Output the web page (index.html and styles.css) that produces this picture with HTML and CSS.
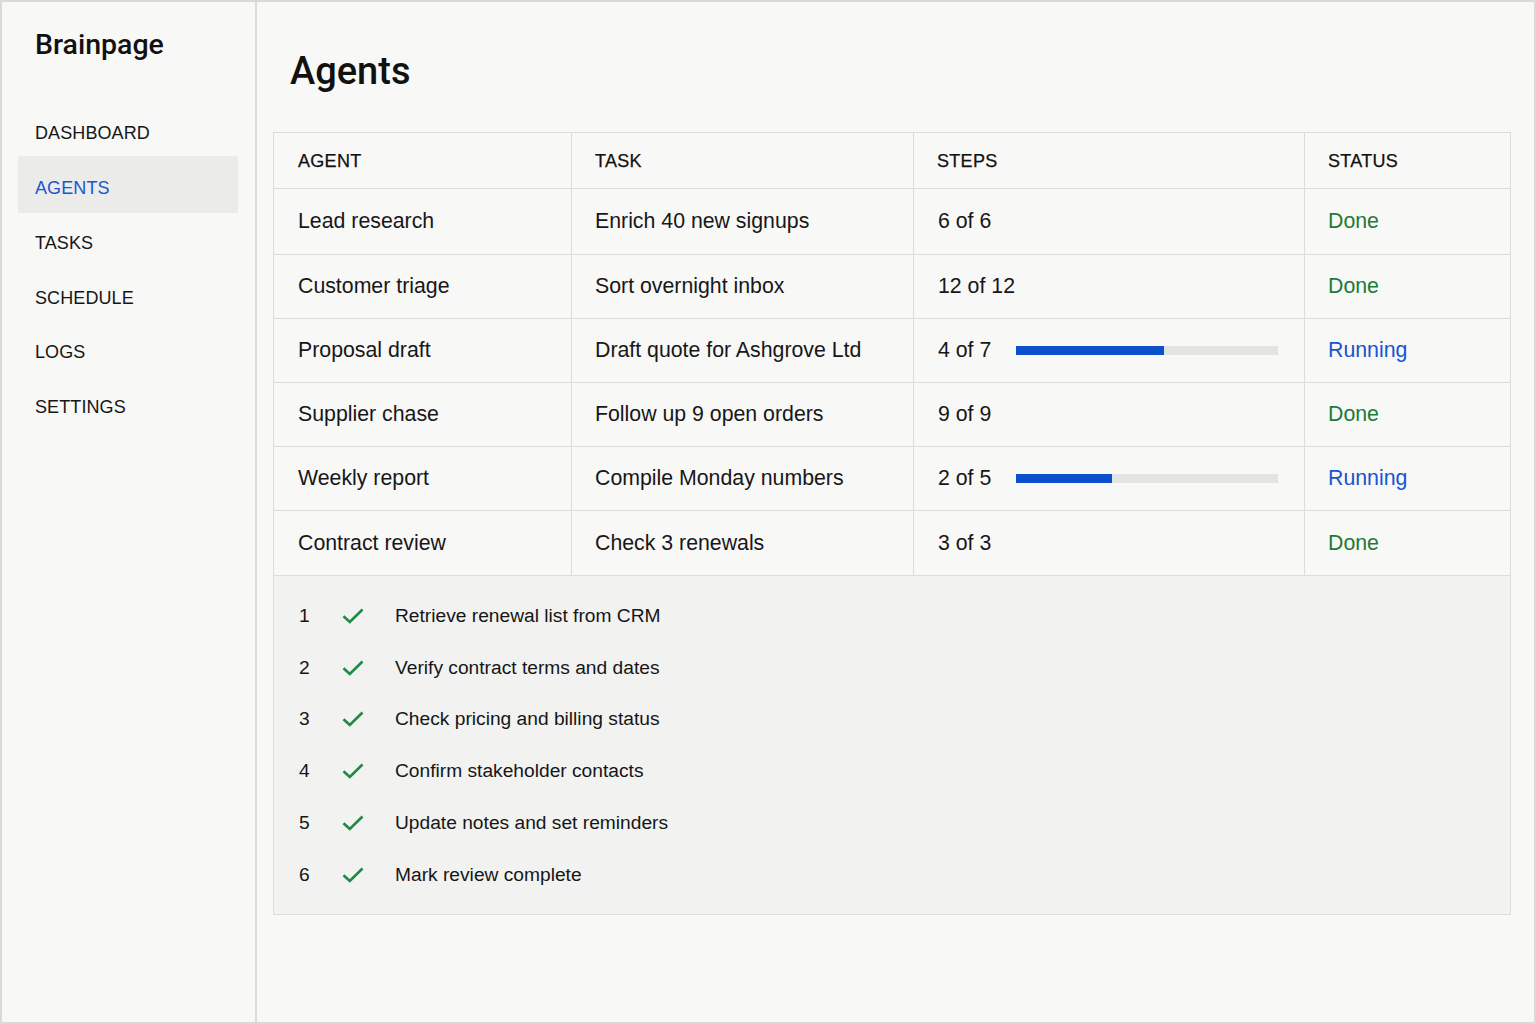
FILE: index.html
```html
<!DOCTYPE html>
<html lang="en">
<head>
<meta charset="utf-8">
<title>Brainpage – Agents</title>
<link rel="stylesheet" href="styles.css">
</head>
<body>
<div class="app">
  <aside class="sidebar">
    <div class="brand">Brainpage</div>
    <nav class="nav">
      <a class="nav-item">DASHBOARD</a>
      <a class="nav-item active">AGENTS</a>
      <a class="nav-item">TASKS</a>
      <a class="nav-item">SCHEDULE</a>
      <a class="nav-item">LOGS</a>
      <a class="nav-item">SETTINGS</a>
    </nav>
  </aside>
  <main class="main">
    <h1 class="title">Agents</h1>
    <table class="agents">
      <colgroup>
        <col class="c-agent"><col class="c-task"><col class="c-steps"><col class="c-status">
      </colgroup>
      <thead>
        <tr><th>AGENT</th><th>TASK</th><th>STEPS</th><th>STATUS</th></tr>
      </thead>
      <tbody>
        <tr class="first"><td>Lead research</td><td>Enrich 40 new signups</td><td><div class="steps"><span class="count">6 of 6</span></div></td><td class="done">Done</td></tr>
        <tr><td>Customer triage</td><td>Sort overnight inbox</td><td><div class="steps"><span class="count">12 of 12</span></div></td><td class="done">Done</td></tr>
        <tr><td>Proposal draft</td><td>Draft quote for Ashgrove Ltd</td><td><div class="steps"><span class="count">4 of 7</span><span class="bar"><span class="fill" style="width:56.5%"></span></span></div></td><td class="running">Running</td></tr>
        <tr><td>Supplier chase</td><td>Follow up 9 open orders</td><td><div class="steps"><span class="count">9 of 9</span></div></td><td class="done">Done</td></tr>
        <tr><td>Weekly report</td><td>Compile Monday numbers</td><td><div class="steps"><span class="count">2 of 5</span><span class="bar"><span class="fill" style="width:36.6%"></span></span></div></td><td class="running">Running</td></tr>
        <tr class="last"><td>Contract review</td><td>Check 3 renewals</td><td><div class="steps"><span class="count">3 of 3</span></div></td><td class="done">Done</td></tr>
        <tr class="detail">
          <td colspan="4">
            <ol class="step-list">
              <li><span class="num">1</span><svg class="check" viewBox="0 0 22 16"><path d="M1.5 8.2 L7.8 14 L20.5 1.5" /></svg><span class="label">Retrieve renewal list from CRM</span></li>
              <li><span class="num">2</span><svg class="check" viewBox="0 0 22 16"><path d="M1.5 8.2 L7.8 14 L20.5 1.5" /></svg><span class="label">Verify contract terms and dates</span></li>
              <li><span class="num">3</span><svg class="check" viewBox="0 0 22 16"><path d="M1.5 8.2 L7.8 14 L20.5 1.5" /></svg><span class="label">Check pricing and billing status</span></li>
              <li><span class="num">4</span><svg class="check" viewBox="0 0 22 16"><path d="M1.5 8.2 L7.8 14 L20.5 1.5" /></svg><span class="label">Confirm stakeholder contacts</span></li>
              <li><span class="num">5</span><svg class="check" viewBox="0 0 22 16"><path d="M1.5 8.2 L7.8 14 L20.5 1.5" /></svg><span class="label">Update notes and set reminders</span></li>
              <li><span class="num">6</span><svg class="check" viewBox="0 0 22 16"><path d="M1.5 8.2 L7.8 14 L20.5 1.5" /></svg><span class="label">Mark review complete</span></li>
            </ol>
          </td>
        </tr>
      </tbody>
    </table>
  </main>
</div>
</body>
</html>
```
FILE: styles.css
```css
* { box-sizing: border-box; }
html, body { margin: 0; padding: 0; }
body {
  font-family: "Liberation Sans", Arial, sans-serif;
  color: #151515;
  background: #f8f8f7;
}
.app {
  display: flex;
  width: 1536px;
  height: 1024px;
  border: 2px solid #dadada;
  background: #f8f8f7;
}
.sidebar {
  width: 255px;
  flex: none;
  border-right: 2px solid #dcdcdc;
  background: #f8f8f7;
  padding: 25px 0 0 0;
}
.brand {
  font-family: Roboto, "Liberation Sans", sans-serif;
  font-weight: 500;
  font-size: 28.5px;
  line-height: 36px;
  color: #111;
  padding-left: 33px;
}
.nav {
  display: flex;
  flex-direction: column;
  margin-top: 43.6px;
}
.nav-item {
  display: flex;
  align-items: center;
  height: 54.7px;
  margin: 0 17px 0 16px;
  padding-left: 17px;
  font-size: 18px;
  color: #161616;
  letter-spacing: 0.1px;
}
.nav-item.active {
  background: #ebebea;
  color: #1b56d2;
  height: 57px;
  margin-top: -5.3px;
  margin-bottom: 3px;
  padding-top: 8px;
}
.main {
  flex: 1;
  padding: 0 23px 0 16px;
}
.title {
  font-family: Roboto, "Liberation Sans", sans-serif;
  font-weight: 500;
  font-size: 38px;
  line-height: 44px;
  color: #111;
  margin: 47px 0 0 17px;
}
.agents {
  margin-top: 39px;
  width: 1237px;
  border-collapse: collapse;
  table-layout: fixed;
  border: 1.5px solid #d9d9d9;
}
.c-agent { width: 298px; }
.c-task { width: 342px; }
.c-steps { width: 391px; }
.c-status { width: 206px; }
.agents th, .agents td {
  border: 1.5px solid #dcdcdc;
  text-align: left;
  padding: 0 0 0 23px;
  vertical-align: middle;
}
.agents th {
  height: 56px;
  padding-top: 2px;
  font-size: 18px;
  font-weight: normal;
  color: #111;
  letter-spacing: 0.3px;
  -webkit-text-stroke: 0.25px #111;
}
.agents th:first-child, .agents td:first-child { padding-left: 24px; }
.agents tbody tr { height: 64px; }
.agents tbody tr.first { height: 66px; }
.agents tbody tr.last { height: 65px; }
.agents tbody td {
  font-size: 21.3px;
  color: #171717;
}
.steps {
  display: flex;
  align-items: center;
  padding-left: 1px;
}
.count {
  width: 78px;
  flex: none;
}
.bar {
  display: block;
  width: 262px;
  height: 9px;
  background: #e4e4e3;
}
.fill {
  display: block;
  height: 100%;
  background: #0c51cb;
}
.agents td.done { color: #1e7b35; }
.agents td.running { color: #1853d0; }
.agents tr.detail { height: auto; }
.agents tr.detail td {
  background: #f2f2f1;
  padding: 14px 0 13px 25px;
}
.step-list {
  list-style: none;
  margin: 0;
  padding: 0;
}
.step-list li {
  display: flex;
  align-items: center;
  height: 51.8px;
  font-size: 19.2px;
  color: #161616;
}
.num {
  width: 43px;
  flex: none;
}
.check {
  width: 22px;
  height: 16px;
  flex: none;
  margin-right: 31px;
  fill: none;
  stroke: #1f8a45;
  stroke-width: 2.6;
}
```
